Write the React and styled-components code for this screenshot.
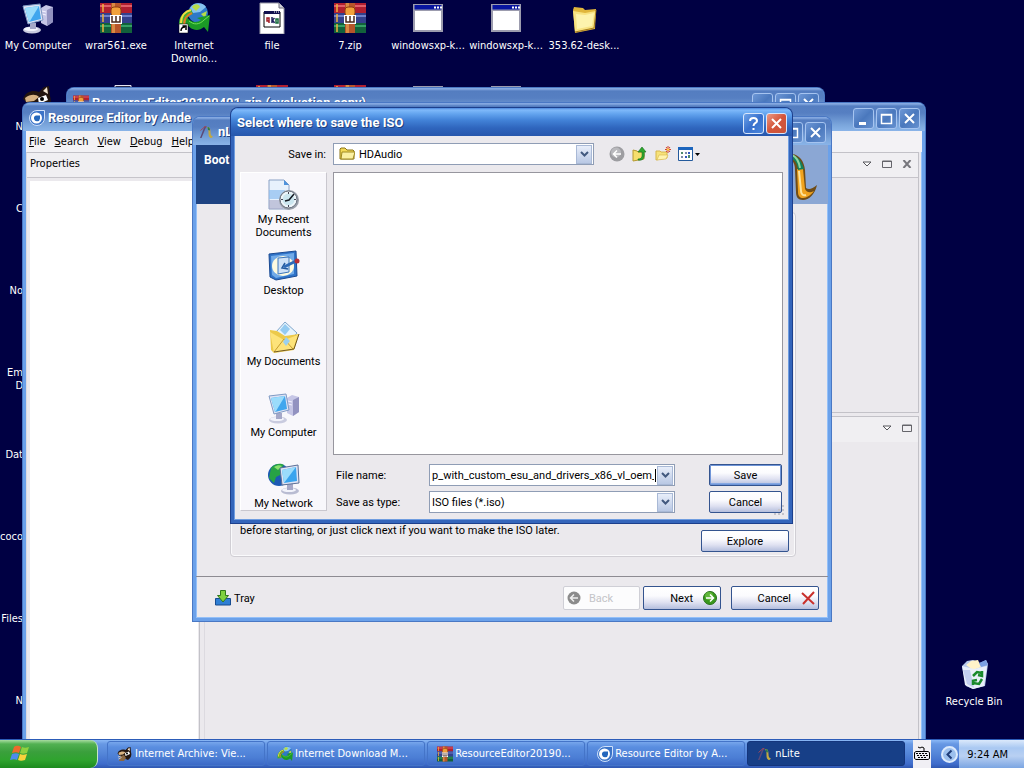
import React from 'react';
import styled, { createGlobalStyle, css } from 'styled-components';

const GlobalStyle = createGlobalStyle`
  * {
    box-sizing: border-box;
  }

  body {
    margin: 0;
    overflow: hidden;
    background: #000043;
    color: #000;
    font-family: Roboto, "Liberation Sans", sans-serif;
    font-size: 11px;
    line-height: 13px;
  }

  button,
  input,
  select {
    font: inherit;
    color: inherit;
    margin: 0;
    padding: 0;
    border: 0;
    outline: none;
    background: none;
  }

  svg {
    display: block;
    flex: none;
  }
`;

const tahoma = '"DejaVu Sans Condensed", "Noto Sans", sans-serif';

const Screen = styled.div`
  display: flex;
  flex-direction: column;
  height: 100vh;
`;

const Desktop = styled.main`
  position: relative;
  flex: 1;
  overflow: hidden;
`;

/* ---------- desktop icons ---------- */

const IconGrid = styled.div`
  display: grid;
  grid-template-columns: repeat(8, 78px);
  grid-auto-rows: 82px;
  margin-left: -1px;
`;

const Shortcut = styled.div`
  display: flex;
  flex-direction: column;
  align-items: center;
  gap: 5px;
  padding-top: 2px;
  color: #fff;
  font-family: ${tahoma};
  text-align: center;
  white-space: pre-line;
`;

const CornerShortcut = styled(Shortcut)`
  position: absolute;
  right: 11px;
  bottom: 31px;
  width: 78px;
`;

const SideLabels = styled.ul`
  position: absolute;
  top: 120px;
  left: 0;
  display: grid;
  grid-auto-rows: 82px;
  width: 22px;
  margin: 0;
  padding: 0;
  list-style: none;
  color: #fff;
  font-family: ${tahoma};
  text-align: right;
  white-space: pre-line;
`;

/* ---------- windows ---------- */

const frames = {
  idle: css`
    border: 3px solid #6ba1ea;
    border-top: 0;
    background: #ebe9ed;
    box-shadow: inset 0 0 0 1px #94c0f8, 0 0 0 1px #4a78c4;
  `,
  active: css`
    border: 3px solid #3465bb;
    border-top: 0;
    background: #ebe9ed;
    box-shadow: inset 0 0 0 1px #6f9de0, 0 0 0 1px #1c3f8c;
  `,
};

const Window = styled.section`
  position: absolute;
  display: flex;
  flex-direction: column;
  border-radius: 7px 7px 0 0;
  ${({ $active }) => (($active) ? frames.active : frames.idle)}
`;

const ArchiveWindow = styled(Window)`
  top: 88px;
  left: 67px;
  width: 757px;
  height: 300px;
`;

const EditorWindow = styled(Window)`
  top: 103px;
  left: 23px;
  width: 902px;
  bottom: -10px;
`;

const NliteWindow = styled(Window)`
  top: 117px;
  left: 193px;
  width: 638px;
  height: 504px;
`;

const SaveWindow = styled(Window)`
  top: 108px;
  left: 231px;
  width: 561px;
  height: 415px;
`;

const TitleBar = styled.header`
  display: flex;
  flex: none;
  align-items: center;
  gap: 3px;
  height: 28px;
  margin: 0 -3px;
  padding: 2px 5px 0 6px;
  border-radius: 7px 7px 0 0;
  color: #fff;
  background: ${({ $active }) =>
    $active
      ? 'linear-gradient(#4a86dc 0, #7fb9fa 2px, #62a3ee 6px, #4383d8 12px, #2f65bd 20px, #2757ac 100%)'
      : 'linear-gradient(#84a8e0 0, #84a8e0 1px, #547dc0 3px, #567fc2 10px, #7ba6dc 22px, #8ab4e8 100%)'};
`;

const Title = styled.h1`
  flex: 1;
  margin: 0;
  font-size: 13px;
  font-weight: 700;
  line-height: 16px;
  white-space: nowrap;
  text-shadow: 1px 1px 0 #1f3f7c;
`;

const Caption = styled.div`
  display: flex;
  gap: 2px;
`;

const CaptionButton = styled.button`
  display: grid;
  place-items: center;
  width: 21px;
  height: 21px;
  border: 1px solid ${({ $tone }) => ($tone ? '#d8e6fb' : '#a6c4f0')};
  border-radius: 3px;
  background: ${({ $tone }) =>
    ({
      red: 'linear-gradient(135deg, #eb9a85, #d4553a 50%, #c9553c)',
      blue: 'linear-gradient(135deg, #6ea4ea, #3870cc 50%, #4a86dc)',
    })[$tone] || 'linear-gradient(135deg, #6d97d6, #4a78bd 50%, #6590cf)'};
`;

/* ---------- resource editor ---------- */

const MenuBar = styled.nav`
  display: flex;
  flex: none;
  align-items: center;
  gap: 9px;
  height: 21px;
  padding-left: 3px;
  background: #f3f2f5;
  font-family: ${tahoma};
`;

const MenuItem = styled.button`
  &::first-letter {
    text-decoration: underline;
  }
`;

const EditorBody = styled.div`
  display: grid;
  grid-template-columns: 174px 1fr;
  column-gap: 4px;
  flex: 1;
  padding-right: 3px;
`;

const Pane = styled.section`
  display: flex;
  flex-direction: column;
  border: 1px solid #c3c2c8;
  border-left-color: #dcdae0;
`;

const PaneHeader = styled.div`
  display: flex;
  flex: none;
  align-items: center;
  justify-content: ${({ $tools }) => ($tools ? 'flex-end' : 'flex-start')};
  gap: 10px;
  height: 25px;
  padding: 0 6px 3px 3px;
  background: #f0eff2;
  border-bottom: 1px solid ${({ $plain }) => ($plain ? 'transparent' : '#c6c4ca')};
  font-family: ${tahoma};
`;

const PropertyList = styled.div`
  flex: 1;
  margin: 3px 1px 0 3px;
  background: #fff;
`;

const PaneStack = styled.div`
  display: grid;
  grid-template-rows: 261px 1fr;
  row-gap: 3px;
`;

/* ---------- nLite ---------- */

const Banner = styled.div`
  display: flex;
  flex: none;
  justify-content: space-between;
  height: 59px;
  padding: 9px 0 0 8px;
  background: linear-gradient(90deg, #1e4382 0, #1e4382 20%, #8ba7d4 95%);
  color: #fff;
  font-size: 12px;
  font-weight: 700;
`;

const WizardBody = styled.div`
  display: flex;
  flex: 1;
  padding: 8px 32px 19px 34px;
  border-bottom: 1px solid #8d8b92;
`;

const GroupBox = styled.div`
  display: flex;
  flex: 1;
  align-items: flex-end;
  justify-content: space-between;
  padding: 0 6px 4px 9px;
  border: 1px solid #d0ced4;
  border-radius: 4px;
  box-shadow: inset 0 0 0 1px #fafafc;
`;

const Hint = styled.p`
  margin: 0 0 15px;
`;

const WizardFooter = styled.footer`
  display: flex;
  flex: none;
  align-items: center;
  height: 41px;
  padding: 1px 9px 0 19px;
`;

const TrayButton = styled.button`
  display: flex;
  align-items: center;
  gap: 3px;
  margin-right: auto;
`;

const PushButton = styled.button`
  display: flex;
  align-items: center;
  justify-content: center;
  width: ${({ $width }) => $width}px;
  height: ${({ $tall }) => ($tall ? 24 : 22)}px;
  border: 1px solid #34548f;
  border-radius: 2px;
  background: linear-gradient(#fff 0, #fbfbfe 40%, #dfe1f1 70%, #b4bedd 100%);
  box-shadow: ${({ $focus }) => ($focus ? 'inset 0 0 0 1px #6f95d8, inset 0 -2px 0 0 #86a8e2' : 'none')};

  &:disabled {
    border-color: #cfcfd6;
    background: #fcfcfd;
    color: #c4c4c8;
  }
`;

const WizardButton = styled(PushButton)`
  justify-content: ${({ $iconFirst }) => ($iconFirst ? 'flex-start' : 'flex-end')};
  gap: ${({ $gap }) => $gap}px;
  margin-left: ${({ $space }) => $space}px;
  padding: 0 3px;
`;

/* ---------- save dialog ---------- */

const DialogBody = styled.form`
  display: grid;
  flex: 1;
  grid-template-columns: 87px 1fr;
  grid-template-rows: 22px 1fr;
  gap: 7px 6px;
  padding: 7px 6px 7px 6px;
`;

const SaveInLabel = styled.label`
  align-self: center;
  padding-right: 1px;
  text-align: right;
`;

const LookIn = styled.div`
  display: flex;
  align-items: center;
  gap: 7px;
`;

const Combo = styled.div`
  position: relative;
  display: flex;
  align-items: center;
  gap: ${({ $icon }) => ($icon ? 4 : 3)}px;
  width: ${({ $width }) => $width}px;
  height: 22px;
  padding: 0 1px 0 ${({ $icon }) => ($icon ? 5 : 2)}px;
  border: 1px solid #8f9db5;
  background: #fff;
`;

const ComboSelect = styled.select`
  flex: 1;
  min-width: 0;
  height: 18px;
  appearance: none;
`;

const ComboInput = styled.input`
  flex: 1;
  min-width: 0;
  height: 18px;
`;

const Caret = styled.span`
  position: absolute;
  right: 18px;
  width: 1px;
  height: 13px;
  background: #000;
`;

const ComboArrow = styled.span`
  display: grid;
  place-items: center;
  width: 16px;
  height: 19px;
  border: 1px solid #a9b9d6;
  background: linear-gradient(#e8eefa, #b9c8e4);
  pointer-events: none;
`;

const ToolButton = styled.button`
  display: grid;
  place-items: center;
  height: 20px;
  min-width: 16px;
`;

const ToolRow = styled.div`
  display: flex;
  gap: 7px;
  margin-left: 8px;
`;

const Places = styled.nav`
  display: grid;
  grid-template-rows: repeat(5, 71px);
  height: 339px;
  overflow: hidden;
  border: 1px solid #fff;
  border-right-color: #c9c7ce;
  border-bottom-color: #c9c7ce;
  background: #f8f7fb;
`;

const Place = styled.button`
  display: flex;
  flex-direction: column;
  align-items: center;
  justify-content: flex-start;
  gap: 2px;
  padding-top: 6px;
  white-space: pre-line;
`;

const DialogMain = styled.div`
  display: flex;
  flex-direction: column;
  gap: 9px;
  min-width: 0;
`;

const FileList = styled.div`
  flex: 1;
  border: 1px solid #97969e;
  background: #fff;
`;

const Fields = styled.div`
  display: grid;
  grid-template-columns: 93px 1fr 73px;
  align-items: center;
  row-gap: 5px;
  padding: 0 1px 0 3px;
`;

const Grip = styled.svg`
  position: absolute;
  right: 3px;
  bottom: 3px;
`;

/* ---------- taskbar ---------- */

const Taskbar = styled.footer`
  position: relative;
  display: flex;
  flex: none;
  align-items: stretch;
  height: 29px;
  border-top: 1px solid #2c5cb8;
  background: linear-gradient(#8ab8f6 0, #6798e4 4px, #5385d8 14px, #3e6ccb 24px, #2f57b0 100%);
  color: #fff;
  font-family: ${tahoma};
`;

const StartButton = styled.button`
  display: flex;
  align-items: center;
  width: 98px;
  padding-left: 10px;
  border-right: 1px solid #c6e6c4;
  border-radius: 0 8px 8px 0;
  background: linear-gradient(#a8dca0 0, #52b152 4px, #3a9f3c 12px, #2fa32e 20px, #1c8a1e 100%);
`;

const TaskList = styled.div`
  display: grid;
  flex: 1;
  grid-template-columns: repeat(5, 1fr);
  gap: 2px;
  padding: 1px 8px 2px 9px;
`;

const Task = styled.button`
  display: flex;
  align-items: center;
  gap: 2px;
  min-width: 0;
  padding-left: 9px;
  border: 1px solid ${({ $current }) => ($current ? '#14357c' : '#4474c8')};
  border-radius: 3px;
  background: ${({ $current }) =>
    $current ? '#173f87' : 'linear-gradient(#77a6ec 0, #5a8ee0 5px, #4b7dd4 16px, #3c69c6 100%)'};
  white-space: nowrap;
`;

const InputTool = styled.div`
  display: grid;
  place-items: center;
  width: 18px;
  background: #f0eff4;
`;

const Tray = styled.div`
  display: flex;
  align-items: center;
  gap: 9px;
  margin-left: 28px;
  padding: 0 16px 0 0;
  background: linear-gradient(#dbe9fb 0, #a9c8f2 8px, #b9d0f2 16px, #7ba5e2 100%);
  color: #000;
`;

const Expander = styled.button`
  margin-left: -18px;
`;

/* ---------- icons ---------- */

const Svg = ({ size = 32, children }) => (
  <svg width={size} height={size} viewBox="0 0 32 32" fill="none">
    {children}
  </svg>
);

const ComputerIcon = () => (
  <Svg>
    <path d="M19 6l5-3 7 2v15l-6 4-6-3z" fill="#c6c6e6" />
    <path d="M25 8l6-3v15l-6 4z" fill="#9292c0" />
    <path d="M20 9l4 1M20 12l4 1" stroke="#f4f4ff" />
    <ellipse cx="10" cy="28" rx="9" ry="3.5" fill="#c9cbdf" />
    <ellipse cx="9" cy="27" rx="7" ry="2" fill="#f2f3fb" />
    <path d="M8 21h6v6H8z" fill="#a5a8c8" />
    <path d="M1 4l17-2 3 16-15 4z" fill="#dfe3f4" />
    <path d="M3 6l14-2 2 13-12 3z" fill="#40a6ee" />
    <path d="M3 6l14-2-9 15-1 1z" fill="#9bdcfb" />
    <path d="M1 4l17-2 3 16-15 4z" stroke="#7f9ac4" />
  </Svg>
);

const RarIcon = ({ size }) => (
  <Svg size={size}>
    <path d="M0 1h32v10H0z" fill="#b01f30" />
    <path d="M0 3h32v2H0z" fill="#e05e68" />
    <path d="M0 11h32v10H0z" fill="#33408c" />
    <path d="M0 13h32v2H0z" fill="#6f7fc8" />
    <path d="M0 21h32v10H0z" fill="#12613b" />
    <path d="M0 23h32v2H0z" fill="#35a065" />
    <path d="M3 2v8M3 12v8M3 22v8" stroke="#f0b13e" strokeWidth="1.5" />
    <path d="M11 1h10v30H11z" fill="#b6552a" />
    <path d="M12 1h3v30h-3z" fill="#d88a43" />
    <rect x="11" y="5" width="10" height="9" rx="3" fill="#f1a13a" stroke="#8c3d12" />
    <path d="M10 13h12v9H10z" fill="#fff" />
    <path d="M12 14v6h8v-6M16 14v6" stroke="#4b2a1d" strokeWidth="1.5" />
  </Svg>
);

const IdmIcon = ({ size, shortcut }) => (
  <Svg size={size}>
    <circle cx="20" cy="11" r="10" fill="#2f78c8" />
    <path d="M12 6c4-7 14-5 16-1l-6 5-7 1z" fill="#86c2f0" />
    <path d="M14 5c3-4 7-3 8 0l-4 4zM23 12l6-3-2 7z" fill="#b7dc48" />
    <path d="M1 25C0 14 6 9 13 7l2 5C9 14 8 18 9 24z" fill="#3fae35" />
    <path d="M3 21C3 13 8 9 13 8" stroke="#f2dc3f" strokeWidth="2" />
    <path d="M6 23c0-7 3-10 8-12" stroke="#e07b24" strokeWidth="2" />
    <path d="M9 15c4 6 10 6 14 3l-4-2 13-3-2 17-4-5c-7 6-15 2-18-5z" fill="#1b9a26" />
    <path d="M11 19c5 4 10 4 15-1l5-4" stroke="#6fdd55" />
    {shortcut && (
      <>
        <path d="M1 22h9v9H1z" fill="#fff" stroke="#000" strokeWidth=".5" />
        <path d="M3 29c0-3 1-4 4-4M4.500 24H8v4" stroke="#000" strokeWidth="1.500" />
      </>
    )}
  </Svg>
);

const FileIcon = () => (
  <Svg>
    <path d="M4 1h19l5 5v26H4z" fill="#fff" stroke="#9a9aa8" />
    <path d="M23 1v5h5" fill="#d0d0dc" stroke="#70707c" />
    <path d="M8 10h16v15H8z" fill="#fff" stroke="#000" />
    <path d="M8 9h16v3H8z" fill="#10104e" />
    <path d="M18 10h5" stroke="#fff" strokeDasharray="1 1" />
    <path d="M11 16h2v3h-2zM13 18v3" stroke="#a21c26" strokeWidth="1.500" />
    <path d="M16 15v6M18.500 16l-2 2 2 3" stroke="#20205e" strokeWidth="1.500" />
    <path d="M20 17h2v4h-2z" stroke="#176a3b" strokeWidth="1.500" />
  </Svg>
);

const SheetIcon = () => (
  <Svg>
    <path d="M15 1.500h16v29H15z" fill="#2a2a44" stroke="#e6e6f2" />
  </Svg>
);

const AppIcon = () => (
  <Svg>
    <path d="M1 2h30v28H1z" fill="#9c9cae" />
    <path d="M2.500 3h27v4.500h-27z" fill="#0714a0" />
    <path d="M22 4.500h2v2h-2zM25 4.500h2v2h-2zM28 4.500h2v2h-2z" fill="#fff" />
    <path d="M3 9h26v19H3z" fill="#fff" />
  </Svg>
);

const FolderIcon = () => (
  <Svg>
    <path d="M5 8l1-3 9 1 2 2 11-1-1 20-20 4z" fill="#e0b63c" />
    <path d="M5 9l12 2 11-2-2 17-19 4z" fill="#f8e382" />
    <path d="M8 12l9 1 9-2-2 13-15 3z" fill="#fdf3ad" />
    <path d="M28 8l-2 18-19 4" stroke="#a77f22" />
  </Svg>
);

const RaccoonIcon = ({ size }) => (
  <Svg size={size}>
    <path d="M1 15c3-8 10-9 16-7l5-5 5-1 1 10c2 6 0 12-6 16L8 22z" fill="#23150f" />
    <path d="M21 7l4-4 1 7z" fill="#f2e4cf" />
    <path d="M3 14c5-4 11-4 14-1l-5 4-8 1z" fill="#d7b283" />
    <path d="M16 14l8-3 2 5-9 4z" fill="#fff" />
    <path d="M8 20l6-2 4 6-4 6H4z" fill="#8a6844" />
    <circle cx="20" cy="15" r="2" fill="#000" />
    <path d="M2 22l6-2M3 26l6-3" stroke="#f1dfc4" strokeWidth="1.500" />
  </Svg>
);

const BinIcon = () => (
  <Svg>
    <path d="M4 8l5-5 6-1 7 3 6-3 2 4-3 22-12 3-7-3z" fill="#b9cbec" />
    <path d="M8 7l5-4 7-1 3 7-8 3z" fill="#fff3c9" />
    <path d="M21 5l7-3 2 5-7 2z" fill="#7ba1e2" />
    <path d="M4 8l12 3 13-3-3 20-11 3-8-4z" fill="#e9f0fa" />
    <path d="M5 12l4 14 7 4-4-18z" fill="#c2cff0" />
    <path d="M15 18l4-4 5 1M24 13v5l-4-1M24 21l-3 5-6-1M15 22v5M14 23l5-1" stroke="#198a2c" strokeWidth="2.500" />
  </Svg>
);

const RecentIcon = () => (
  <Svg>
    <path d="M1 1h15l5 5v24H1z" fill="#e7f1fc" stroke="#8aa1c4" />
    <path d="M1 11h16v9H1z" fill="#8dbdf0" opacity=".7" />
    <path d="M1 21h14v9H1z" fill="#a9a9c6" opacity=".6" />
    <path d="M16 1v5h5z" fill="#4f93dc" />
    <circle cx="21" cy="21" r="10" fill="#9aa0aa" />
    <circle cx="20.500" cy="20.500" r="8.500" fill="#eef6fa" stroke="#666e7c" />
    <circle cx="20.500" cy="20.500" r="6" fill="#cbe6ef" />
    <path d="M26 15l-5 6-4 1" stroke="#141a22" strokeWidth="1.500" />
    <path d="M20.500 13v2M20.500 26v2M13 20.500h2M26 20.500h2" stroke="#445" />
  </Svg>
);

const DesktopIcon = () => (
  <Svg>
    <path d="M1 4l27-3 1 25-21 4-6-3z" fill="#2f73c8" stroke="#1b4a92" />
    <path d="M3 6l23-3v21L8 28l-4-3z" fill="#71aae8" />
    <ellipse cx="15" cy="16" rx="11" ry="10" fill="#fffbe0" />
    <path d="M10 8l11-1v15l-11 2z" fill="#cfe2f8" stroke="#3c76bb" />
    <path d="M17 13l-3 5 6 1" stroke="#245a9f" strokeWidth="1.500" />
    <path d="M16 17l12-6" stroke="#2d69b6" strokeWidth="3" />
    <circle cx="29" cy="11" r="2.500" fill="#b62f36" />
  </Svg>
);

const DocumentsIcon = () => (
  <Svg>
    <path d="M8 11l9-10 12 11-12 14z" fill="#e7f4fd" stroke="#7fa6cc" />
    <path d="M12 9l5-6 5 5-5 6z" fill="#7fc0ee" opacity=".8" />
    <path d="M2 9l7 1 8 5 14-2-5 16-20 3-3-3z" fill="#ecc94a" />
    <path d="M2 11l14 8 14-5-5 14-19 4z" fill="#fde37a" />
    <path d="M6 31l10-13 9 10" stroke="#c79c2d" />
    <path d="M31 13l-5 15-20 3" stroke="#725a22" />
    <path d="M15 21l3-5 4 4-4 5z" fill="#9bd0ee" />
  </Svg>
);

const NetworkIcon = () => (
  <Svg>
    <circle cx="11" cy="12" r="11" fill="#1c59b4" />
    <path d="M3 5c4-5 10-5 13-3l-4 5 2 4-6 3-2 6-5-5z" fill="#27a245" />
    <path d="M6 4c3-2 6-2 8-1l-4 4z" fill="#8ae06e" />
    <ellipse cx="22" cy="28" rx="9" ry="3.500" fill="#b9bcd2" />
    <ellipse cx="21" cy="27" rx="7" ry="2" fill="#f2f3fb" />
    <path d="M19 20h6v7h-6z" fill="#a5a8c8" />
    <path d="M12 5l18-3 1 18-17 2z" fill="#dfe3f4" stroke="#5c6f96" />
    <path d="M14 7l14-3 1 14-13 2z" fill="#3aa4ee" />
    <path d="M14 7l14-3-12 16z" fill="#9bdcfb" />
  </Svg>
);

const EditorIcon = () => (
  <Svg size={16}>
    <path d="M16 1h15v15a15 15 0 1 1-15-15z" fill="#3b74c8" stroke="#cfe0fa" strokeWidth="2" />
    <circle cx="15" cy="16" r="11" fill="#fff" />
    <path d="M14 11h8v6a6 6 0 1 1-8-6z" fill="#2467bc" />
  </Svg>
);

const NliteIcon = () => (
  <Svg size={16}>
    <path d="M2 28L11 5l4-1-3 7L5 28z" fill="#5b4a78" />
    <path d="M3 13l9-8 3 1" stroke="#a2485a" strokeWidth="2" />
    <path d="M17 6c5-1 6 5 6 10 0 5 1 8 5 9l-3 3c-5 0-6-5-6-10 0-6 0-9-3-10z" fill="#c2a842" />
    <path d="M17 6c4 0 5 3 5 7l-4-1z" fill="#297b50" />
  </Svg>
);

const BannerArt = () => (
  <svg width="40" height="50" viewBox="0 0 40 50" fill="none">
    <path d="M1 0c9-1 15 6 16 16l1 18c3 2 6 1 11-3-2 9-8 15-14 15-5 0-7-3-7-8L7 16C7 10 5 6 1 5z" fill="#6f4c17" />
    <path d="M9 15h6l2 20c2 4 5 4 9 2-3 4-7 7-11 7-3 0-5-2-5-6z" fill="#f0a31f" />
    <path d="M11 17l2 20c0 3 2 5 5 4" stroke="#fde39b" strokeWidth="2" />
    <path d="M1 1c8-1 13 6 15 14l-6 1C9 9 7 5 1 4z" fill="#13805a" />
    <path d="M4 1c5 2 7 7 8 13" stroke="#8fd4a0" strokeWidth="2" />
  </svg>
);

const SmallFolder = () => (
  <svg width="16" height="16" viewBox="0 0 16 16">
    <path d="M1 13V3l1-1h4l2 2h6l1 1v8z" fill="#f3d956" stroke="#8c7516" />
    <path d="M2 13l1-7h13l-2 7z" fill="#fbf0a2" stroke="#a08a22" />
  </svg>
);

const BackIcon = () => (
  <svg width="16" height="16" viewBox="0 0 16 16" fill="none">
    <circle cx="8" cy="8" r="7.500" fill="#9d9da1" />
    <circle cx="7" cy="6.500" r="5" fill="#b9b9bd" />
    <path d="M12 8H4.500M8 4.500L4.500 8 8 11.500" stroke="#fff" strokeWidth="1.500" />
  </svg>
);

const UpIcon = () => (
  <svg width="16" height="16" viewBox="0 0 16 16">
    <path d="M1 15V4l4 1 1 1h6v7z" fill="#f5df6d" stroke="#b59a32" />
    <path d="M6 13c5 0 4-4 4-7H6l4-5 4 5h-2c1 6-1 9-6 8z" fill="#2fa82e" stroke="#136b1b" strokeWidth=".6" />
  </svg>
);

const NewFolderIcon = () => (
  <svg width="16" height="16" viewBox="0 0 16 16" fill="none">
    <path d="M1 14V5h4l1 1h6v6z" fill="#f7e27a" stroke="#d6b64a" />
    <path d="M2 14l2-5h9l-2 4z" fill="#fff4ae" stroke="#d6b64a" strokeWidth=".6" />
    <path d="M13 0v7M10 3.500h6M11 1l4 5M15 1l-4 5" stroke="#d2402d" />
    <circle cx="13" cy="3.500" r="1.200" fill="#ffd24a" />
  </svg>
);

const ViewsIcon = () => (
  <svg width="23" height="16" viewBox="0 0 23 16">
    <path d="M.5 1.500h14v13H.5z" fill="#fff" stroke="#245a9c" />
    <path d="M0 1h15v3H0z" fill="#1c65bd" />
    <path d="M3 6h2v2H3zM10 9h2v3h-2z" fill="#4e8a6c" />
    <path d="M7 6h2v2H7zM3 10h2v2H3z" fill="#7b8aa8" />
    <path d="M10 6h2v2h-2zM7 10h2v2H7z" fill="#2f57c0" />
    <path d="M17 7h5l-2.500 3z" fill="#000" />
  </svg>
);

const Chevron = () => (
  <svg width="9" height="7" viewBox="0 0 9 7" fill="none">
    <path d="M1 1l3.500 3.500L8 1" stroke="#42597f" strokeWidth="2" />
  </svg>
);

const NextIcon = () => (
  <svg width="14" height="14" viewBox="0 0 14 14" fill="none">
    <circle cx="7" cy="7" r="6.500" fill="#39981d" stroke="#27701a" />
    <circle cx="6" cy="5" r="4" fill="#7ccb4f" opacity=".6" />
    <path d="M3 7h7M7 3.500L10.500 7 7 10.500" stroke="#fff" strokeWidth="1.500" />
  </svg>
);

const GreyBackIcon = () => (
  <svg width="14" height="14" viewBox="0 0 14 14" fill="none">
    <circle cx="7" cy="7" r="6.500" fill="#8b8b8b" />
    <path d="M11 7H4M7 3.500L3.500 7 7 10.500" stroke="#eee" strokeWidth="1.500" />
  </svg>
);

const RedCross = () => (
  <svg width="14" height="14" viewBox="0 0 14 14" fill="none">
    <path d="M1 2l12 11M13 1L2 13" stroke="#c9302c" strokeWidth="2" />
  </svg>
);

const TrayIcon = () => (
  <svg width="16" height="16" viewBox="0 0 16 16">
    <path d="M.5 8.500h15v6.500H.5z" fill="#2f7fd4" stroke="#174c90" />
    <path d="M5.500.5h5v5h3L8 12 2.500 5.500h3z" fill="#7fd13f" stroke="#317a1b" />
  </svg>
);

const glyphs = {
  min: <path d="M2 10h7v3H2z" fill="#fff" />,
  max: <path d="M1.500 2.500h10v9h-10zM1 3h11" stroke="#fff" strokeWidth="1.500" />,
  close: <path d="M2 2l9 9M11 2l-9 9" stroke="#fff" strokeWidth="2" />,
  help: <path d="M3 4c0-4 7-4 7 0 0 2-3.500 2-3.500 5M6.500 11v2" stroke="#fff" strokeWidth="2" />,
};

const CaptionIcon = ({ kind, tone }) => (
  <CaptionButton type="button" aria-label={kind} $tone={tone}>
    <svg width="13" height="13" viewBox="0 0 13 13" fill="none">
      {glyphs[kind]}
    </svg>
  </CaptionButton>
);

const StandardCaption = () => (
  <Caption>
    <CaptionIcon kind="min" />
    <CaptionIcon kind="max" />
    <CaptionIcon kind="close" />
  </Caption>
);

const PaneTools = ({ closable }) => (
  <>
    <svg width="10" height="8" viewBox="0 0 10 8" fill="none">
      <path d="M1 2h8L5 6z" fill="#fff" stroke="#55555b" />
    </svg>
    <svg width="10" height="8" viewBox="0 0 10 8" fill="none">
      <path d="M.5 1h9v6.500h-9zM0 1.500h10" stroke="#65656b" />
    </svg>
    {closable && (
      <svg width="10" height="8" viewBox="0 0 10 8" fill="none">
        <path d="M1.500 0l7 8M8.500 0l-7 8" stroke="#77777d" strokeWidth="2" />
      </svg>
    )}
  </>
);

/* ---------- data ---------- */

const shortcuts = [
  { label: 'My Computer', icon: <ComputerIcon /> },
  { label: 'wrar561.exe', icon: <RarIcon /> },
  { label: 'Internet\nDownlo...', icon: <IdmIcon shortcut /> },
  { label: 'file', icon: <FileIcon /> },
  { label: '7.zip', icon: <RarIcon /> },
  { label: 'windowsxp-k...', icon: <AppIcon /> },
  { label: 'windowsxp-k...', icon: <AppIcon /> },
  { label: '353.62-desk...', icon: <FolderIcon /> },
  { icon: <RaccoonIcon /> },
  { icon: <SheetIcon /> },
  {},
  { icon: <RarIcon /> },
  { icon: <RarIcon /> },
  { icon: <AppIcon /> },
  { icon: <AppIcon /> },
];

const sideLabels = ['N', 'C', 'No', 'Em\nD', 'Dat', 'coco', 'Files', 'N'];

const menus = ['File', 'Search', 'View', 'Debug', 'Help'];

const places = [
  { label: 'My Recent\nDocuments', icon: <RecentIcon /> },
  { label: 'Desktop', icon: <DesktopIcon /> },
  { label: 'My Documents', icon: <DocumentsIcon /> },
  { label: 'My Computer', icon: <ComputerIcon /> },
  { label: 'My Network', icon: <NetworkIcon /> },
];

const tasks = [
  { label: 'Internet Archive: Vie...', icon: <RaccoonIcon size={16} /> },
  { label: 'Internet Download M...', icon: <IdmIcon size={16} /> },
  { label: 'ResourceEditor20190...', icon: <RarIcon size={16} /> },
  { label: 'Resource Editor by A...', icon: <EditorIcon /> },
  { label: 'nLite', icon: <NliteIcon />, current: true },
];

const SaveDialog = () => (
  <SaveWindow $active>
    <TitleBar $active>
      <Title>Select where to save the ISO</Title>
      <Caption>
        <CaptionIcon kind="help" tone="blue" />
        <CaptionIcon kind="close" tone="red" />
      </Caption>
    </TitleBar>
    <DialogBody>
      <SaveInLabel htmlFor="save-in">Save in:</SaveInLabel>
      <LookIn>
        <Combo $width={261} $icon>
          <SmallFolder />
          <ComboSelect id="save-in">
            <option>HDAudio</option>
          </ComboSelect>
          <ComboArrow><Chevron /></ComboArrow>
        </Combo>
        <ToolRow>
          <ToolButton type="button" aria-label="Back"><BackIcon /></ToolButton>
          <ToolButton type="button" aria-label="Up one level"><UpIcon /></ToolButton>
          <ToolButton type="button" aria-label="New folder"><NewFolderIcon /></ToolButton>
          <ToolButton type="button" aria-label="Views"><ViewsIcon /></ToolButton>
        </ToolRow>
      </LookIn>
      <Places>
        {places.map(({ label, icon }) => (
          <Place type="button" key={label}>
            {icon}
            {label}
          </Place>
        ))}
      </Places>
      <DialogMain>
        <FileList />
        <Fields>
          <label htmlFor="file-name">File name:</label>
          <Combo $width={246}>
            <ComboInput id="file-name" defaultValue="p_with_custom_esu_and_drivers_x86_vl_oem_" />
            <Caret />
            <ComboArrow><Chevron /></ComboArrow>
          </Combo>
          <PushButton type="button" $width={73} $focus>Save</PushButton>
          <label htmlFor="save-type">Save as type:</label>
          <Combo $width={246}>
            <ComboSelect id="save-type">
              <option>ISO files (*.iso)</option>
            </ComboSelect>
            <ComboArrow><Chevron /></ComboArrow>
          </Combo>
          <PushButton type="button" $width={73}>Cancel</PushButton>
        </Fields>
      </DialogMain>
    </DialogBody>
    <Grip width="12" height="12" viewBox="0 0 12 12">
      <path d="M8 0h2v2H8zM4 4h2v2H4zM8 4h2v2H8zM0 8h2v2H0zM4 8h2v2H4zM8 8h2v2H8z" fill="#c5c3ca" />
    </Grip>
  </SaveWindow>
);

const App = () => {
  return (
    <Screen>
      <GlobalStyle />
      <Desktop>
        <IconGrid>
          {shortcuts.map(({ label, icon }, i) => (
            <Shortcut key={i}>
              {icon}
              {label}
            </Shortcut>
          ))}
        </IconGrid>
        <SideLabels>
          {sideLabels.map((label, i) => (
            <li key={i}>{label}</li>
          ))}
        </SideLabels>
        <CornerShortcut>
          <BinIcon />
          Recycle Bin
        </CornerShortcut>

        <ArchiveWindow>
          <TitleBar>
            <RarIcon size={16} />
            <Title>ResourceEditor20190401.zip (evaluation copy)</Title>
            <StandardCaption />
          </TitleBar>
        </ArchiveWindow>

        <EditorWindow>
          <TitleBar>
            <EditorIcon />
            <Title>Resource Editor by Ande</Title>
            <StandardCaption />
          </TitleBar>
          <MenuBar>
            {menus.map((menu) => (
              <MenuItem type="button" key={menu}>{menu}</MenuItem>
            ))}
          </MenuBar>
          <EditorBody>
            <Pane>
              <PaneHeader>Properties</PaneHeader>
              <PropertyList />
            </Pane>
            <PaneStack>
              <Pane>
                <PaneHeader $tools><PaneTools closable /></PaneHeader>
              </Pane>
              <Pane>
                <PaneHeader $tools $plain><PaneTools /></PaneHeader>
              </Pane>
            </PaneStack>
          </EditorBody>
        </EditorWindow>

        <NliteWindow>
          <TitleBar>
            <NliteIcon />
            <Title>nL</Title>
            <StandardCaption />
          </TitleBar>
          <Banner>
            Boot
            <BannerArt />
          </Banner>
          <WizardBody>
            <GroupBox>
              <Hint>before starting, or just click next if you want to make the ISO later.</Hint>
              <PushButton type="button" $width={88}>Explore</PushButton>
            </GroupBox>
          </WizardBody>
          <WizardFooter>
            <TrayButton type="button">
              <TrayIcon />
              Tray
            </TrayButton>
            <WizardButton type="button" disabled $tall $width={77} $gap={8} $space={0} $iconFirst>
              <GreyBackIcon />
              Back
            </WizardButton>
            <WizardButton type="button" $tall $width={78} $gap={10} $space={3}>
              Next
              <NextIcon />
            </WizardButton>
            <WizardButton type="button" $tall $width={88} $gap={10} $space={10}>
              Cancel
              <RedCross />
            </WizardButton>
          </WizardFooter>
        </NliteWindow>

        <SaveDialog />
      </Desktop>

      <Taskbar>
        <StartButton type="button" aria-label="Start">
          <svg width="20" height="18" viewBox="0 0 20 18">
            <path d="M4 2c3-2 5-1 7 0L9 8C7 7 5 7 2 8z" fill="#ee6a2c" />
            <path d="M12 2c2 1 4 1 7 0l-2 6c-3 1-5 1-7 0z" fill="#8fd13f" />
            <path d="M2 9c3-1 5-1 7 0l-2 6c-2-1-4-1-7 0z" fill="#4d8bec" />
            <path d="M10 9c2 1 4 1 7 0l-2 6c-3 1-5 1-7 0z" fill="#f9d23c" />
          </svg>
        </StartButton>
        <TaskList>
          {tasks.map(({ label, icon, current }) => (
            <Task type="button" key={label} $current={current}>
              {icon}
              {label}
            </Task>
          ))}
        </TaskList>
        <InputTool>
          <svg width="16" height="16" viewBox="0 0 16 16" fill="none">
            <path d="M4 1l2 1 2-1 2 1v3" stroke="#000" />
            <path d="M2 5.500h12l1.500 1v6l-1.500 1H2l-1.500-1v-6z" stroke="#000" />
            <path d="M2 7.500h12M3 9.500h11M4 11.500h8" stroke="#000" strokeDasharray="2 1" />
          </svg>
        </InputTool>
        <Tray>
          <Expander type="button" aria-label="Show hidden icons">
            <svg width="17" height="17" viewBox="0 0 17 17" fill="none">
              <circle cx="8.500" cy="8.500" r="7.500" fill="#9cc0ee" stroke="#dceafc" strokeWidth="2" />
              <path d="M10.500 4.500l-4 4 4 4" stroke="#1f3c78" strokeWidth="2" />
            </svg>
          </Expander>
          9:24 AM
        </Tray>
      </Taskbar>
    </Screen>
  );
};

export default App;
